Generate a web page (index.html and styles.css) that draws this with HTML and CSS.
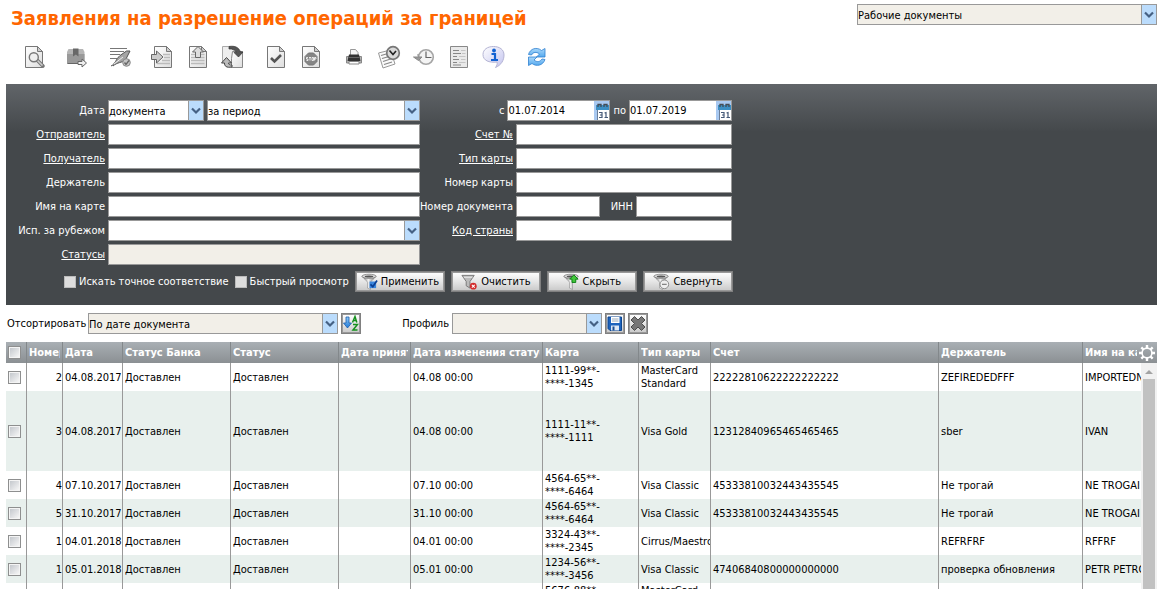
FILE: index.html
```html
<!DOCTYPE html>
<html lang="ru">
<head>
<meta charset="utf-8">
<title>Заявления на разрешение операций за границей</title>
<link rel="stylesheet" href="styles.css">
</head>
<body>
<svg class="defs" aria-hidden="true">
  <defs>
    <linearGradient id="paper" x1="0" y1="0" x2="1" y2="1"><stop offset="0" stop-color="#fff"/><stop offset="1" stop-color="#dedede"/></linearGradient>
    <linearGradient id="metal" x1="0" y1="0" x2="1" y2="0"><stop offset="0" stop-color="#555"/><stop offset=".45" stop-color="#f4f4f4"/><stop offset="1" stop-color="#666"/></linearGradient>
    <linearGradient id="blue" x1="0" y1="0" x2="0" y2="1"><stop offset="0" stop-color="#8fcbf7"/><stop offset="1" stop-color="#1f78d8"/></linearGradient>
    <linearGradient id="sky" x1="0" y1="0" x2="0" y2="1"><stop offset="0" stop-color="#a9d8fb"/><stop offset="1" stop-color="#55a9ee"/></linearGradient>
    <linearGradient id="bubble" x1="0" y1="0" x2="1" y2="1"><stop offset="0" stop-color="#fff"/><stop offset="1" stop-color="#c3c3ee"/></linearGradient>
    <symbol id="page" viewBox="0 0 24 24"><path d="M3.500 1.500h12l5 5v16h-17z" fill="url(#paper)" stroke="#777"/><path d="M15.500 1.500v5h5z" fill="#ccc" stroke="#777"/></symbol>
    <symbol id="funnel" viewBox="0 0 18 18"><path d="M1 3.500C3 6 6 8 7 10v6l3 1.500V10c1-2 4-4 6-6.500z" fill="url(#metal)" stroke="#888" stroke-width=".6"/><ellipse cx="8.500" cy="3.500" rx="7.500" ry="2.200" fill="#ddd" stroke="#777" stroke-width=".8"/><ellipse cx="8.500" cy="3.700" rx="4.500" ry="1.100" fill="#555"/></symbol>
    <symbol id="calendar" viewBox="0 0 15 19"><path d="M0 0h15v19H0z" fill="#a9c9f1"/><path d="M3 9h12v10H3z" fill="#fff"/><path d="M2 4h13v5H2z" fill="#3c8fc4"/><path d="M3.500 19V9" fill="none" stroke="#6c7f99"/><path d="M4 6V3.500h3V6M10 6V3.500h3V6" fill="none" stroke="#454c55" stroke-width="1.300"/><path d="M5 11.500h3V16.500H5M6 14h2M10.500 12l1.500-.5v5M10.500 16.500h3.500" fill="none" stroke="#465a78" stroke-width="1.200"/></symbol>
  </defs>
</svg>
<div class="app">
  <header class="top">
    <h1 class="title">Заявления на разрешение операций за границей</h1>
    <select class="combo muted scope" aria-label="Раздел"><option>Рабочие документы</option></select>
  </header>

  <nav class="toolbar" aria-label="Действия">
    <button class="tool" aria-label="Просмотр"><svg viewBox="0 0 24 24"><use href="#page"/><path d="M15 15l6 6" stroke="#777" stroke-width="3.600" stroke-linecap="round"/><path d="M15 15l5.500 5.500" stroke="#ccc" stroke-width="1.600"/><circle cx="11.800" cy="12.200" r="4.500" fill="#eee" stroke="#777" stroke-width="1.400"/></svg></button>
    <button class="tool" aria-label="Архив"><svg viewBox="0 0 24 24"><path d="M3.500 4h14.500l1.500 3v11.500H2V7z" fill="#b5b5b5"/><path d="M2 9h17.500v9.500H2z" fill="#999"/><path d="M2.500 18.500h16" stroke="#666"/><path d="M8 3.500h5.500v8l-2.700-2-2.800 2z" fill="#686868"/><path d="M13 16.500h4V14l4.500 4-4.500 4v-2.500h-4z" fill="#eee" stroke="#666"/></svg></button>
    <button class="tool" aria-label="Подписать"><svg viewBox="0 0 24 24"><path d="M2 3.500h17M2 6.500h14M2 9.500h10M2 13.500h7" stroke="#777"/><path d="M3 21c4-1.500 5-7 9-10.500l6.500-4.500h3.500l-4.500 9c-4 3-8 2-12.500 6" fill="#a5a5a5" stroke="#555"/><path d="M6 19l9-7" stroke="#eee"/><circle cx="18.500" cy="17.500" r="3.800" fill="#c4c4c4" stroke="#888"/><path d="M16.500 17.500l1.500 2 3-4" fill="none" stroke="#666" stroke-width="1.300"/></svg></button>
    <span class="tool-group">
      <button class="tool" aria-label="Импорт"><svg viewBox="0 0 24 24"><use href="#page"/><path d="M12 9.500h7M13 12.500h6M11 15.500h8M6 18.500h13" stroke="#bbb" stroke-width="1.500"/><path d="M.5 9.500h5V6l6.500 6-6.500 6v-3.500h-5z" fill="#ccc" stroke="#666"/></svg></button>
      <button class="tool" aria-label="Экспорт"><svg viewBox="0 0 24 24"><use href="#page"/><path d="M5 9.500h13.500M5 12.500h13.500M5 15.500h13.500M5 18.500h13.500" stroke="#bbb" stroke-width="1.500"/><path d="M9.500 12.500V7H6.500L12 1.500 17.500 7h-3v5.500z" fill="#ddd" stroke="#666"/></svg></button>
      <button class="tool" aria-label="Обмен"><svg viewBox="0 0 24 24"><path d="M1.500 1.500h7l4 4v12h-11z" fill="#eee" stroke="#aaa"/><path d="M11.500 6.500h10v16h-11v-9z" fill="url(#paper)" stroke="#888"/><path d="M8 1.500c6-1 10 1 11.500 5.500h2.500L17.500 12 13 7.500h2.500C14 5 12 3.500 8 4z" fill="#555" stroke="#333" stroke-width=".7"/><path d="M11 22c-6 1-7.500-1-7.500-4H.5L5.500 12.500l5 5.500H7.500c0 1.500 1 2 3.500 2z" fill="#bbb" stroke="#444"/></svg></button>
    </span>
    <span class="tool-group">
      <button class="tool" aria-label="Проверить"><svg viewBox="0 0 24 24"><use href="#page"/><path d="M7 13l3.500 3.500L17 10" fill="none" stroke="#555" stroke-width="2.600"/></svg></button>
      <button class="tool" aria-label="Остановить"><svg viewBox="0 0 24 24"><use href="#page"/><path d="M9.500 8h5l3.500 3.500v5L14.500 20h-5L6 16.500v-5z" fill="#858585" stroke="#777"/><path d="M9 12.500H7.500V14H9v1.500H7.500M10 12.500h2M11 12.500v3M13 12.500h1.500v3H13zM15.500 15.500v-3H17V14h-1.500" fill="none" stroke="#fff" stroke-width=".8"/></svg></button>
    </span>
    <span class="tool-group">
      <button class="tool" aria-label="Печать"><svg viewBox="0 0 24 24"><path d="M8.500 12V4.500h5l2.500 3V12" fill="#f6f6f6" stroke="#999"/><path d="M4.500 11.500h15v6.500h-15z" fill="#b5b5b5" stroke="#888"/><path d="M7 9.500h10l1.500 6.500h-13z" fill="#333"/><path d="M7 12.500h10" stroke="#666"/><path d="M7 16.500h10v2.500H7z" fill="#fff" stroke="#888"/></svg></button>
      <button class="tool" aria-label="Расписание"><svg viewBox="0 0 24 24"><path d="M1.500 8l12-3 4.500 14-12 4z" fill="#fafafa" stroke="#999"/><path d="M4 10.500l7-2M5 13.500l9-2.500M6 16.500l9-3M7 19.500l8-2.500" stroke="#888" stroke-width="1.200"/><circle cx="16" cy="8" r="6.300" fill="#d9d9d9" stroke="#777" stroke-width="1.700"/><path d="M12.500 5.500L16 9.500l3-3.500" fill="none" stroke="#222" stroke-width="1.600"/></svg></button>
      <button class="tool" aria-label="История"><svg viewBox="0 0 24 24"><circle cx="14" cy="12" r="7.300" fill="#f4f4f4" stroke="#a5a5a5" stroke-width="1.600"/><path d="M14 6.500v6h5.500" fill="none" stroke="#666" stroke-width="1.200"/><path d="M1.500 12h8.500L6.500 15.500z" fill="#999" stroke="#888"/><path d="M6 11.500V9" stroke="#888"/></svg></button>
      <button class="tool" aria-label="Реестр"><svg viewBox="0 0 24 24"><path d="M3.500 1.500h17v21h-17z" fill="#e9e9e9" stroke="#888"/><path d="M6 5.500h6M6 8.500h8M6 11.500h4M6 14.500h6M6 17.500h4M6 20h8" stroke="#888" stroke-width="1.200"/><path d="M14 5.500h4.500M15 8.500h3.500M12 11.500h6.500M14 14.500h4.500M12 17.500h6.500" stroke="#c4c4c4" stroke-width="1.200"/></svg></button>
      <button class="tool" aria-label="Информация"><svg viewBox="0 0 24 24"><path d="M11.500 1.500c6 0 10.500 3 10.500 8.500 0 5-2.500 10-8.500 12.500 1.500-2 2-3.500 1.500-5.500C7 18 1 15.500 1 9.500c0-5 4.500-8 10.500-8z" fill="url(#bubble)" stroke="#b4b4d4"/><circle cx="12" cy="5.500" r="1.900" fill="#1463d2"/><path d="M9.500 9h3.500v5.500M9 15h7" fill="none" stroke="#1463d2" stroke-width="2.200"/></svg></button>
    </span>
    <button class="tool" aria-label="Обновить"><svg viewBox="0 0 24 24"><path d="M3.500 9.500C5 3.500 12 1.500 16.500 5.500l3.500-2v8.500h-8.500l3-3C11.500 6.500 8 7 6.500 10z" fill="url(#sky)" stroke="#2f80d0" stroke-width=".8"/><path d="M20 14.500c-2 6-8.500 7.500-13 4L3.500 20.500V12H12l-3 3c3 2.500 6 2 8-1z" fill="url(#sky)" stroke="#2f80d0" stroke-width=".8"/></svg></button>
  </nav>

  <form class="filter">
    <div class="fields">
      <label for="date-kind">Дата</label>
      <div class="pair">
        <select class="combo kind" id="date-kind"><option>документа</option></select>
        <select class="combo grow" aria-label="Период"><option>за период</option></select>
      </div>
      <div class="period">
        <label for="from">с</label>
        <span class="date"><input id="from" value="01.07.2014"><button type="button" aria-label="Календарь"><svg viewBox="0 0 15 19"><use href="#calendar"/></svg></button></span>
        <label for="to">по</label>
        <span class="date"><input id="to" value="01.07.2019"><button type="button" aria-label="Календарь"><svg viewBox="0 0 15 19"><use href="#calendar"/></svg></button></span>
      </div>

      <label for="sender"><a href="#">Отправитель</a></label><input class="box" id="sender">
      <label for="account"><a href="#">Счет №</a></label><input class="box" id="account">
      <label for="receiver"><a href="#">Получатель</a></label><input class="box" id="receiver">
      <label for="card-type"><a href="#">Тип карты</a></label><input class="box" id="card-type">
      <label for="holder">Держатель</label><input class="box" id="holder">
      <label for="card-no">Номер карты</label><input class="box" id="card-no">
      <label for="card-name">Имя на карте</label><input class="box" id="card-name">
      <label for="doc-no">Номер документа</label>
      <div class="pair split"><input class="box doc" id="doc-no"><label for="inn">ИНН</label><input class="box inn" id="inn"></div>
      <label for="abroad">Исп. за рубежом</label><select class="combo" id="abroad"><option></option></select>
      <label for="country"><a href="#">Код страны</a></label><input class="box" id="country">
      <label for="statuses"><a href="#">Статусы</a></label><input class="box muted" id="statuses" readonly>
    </div>
    <div class="actions">
      <label class="check"><input type="checkbox">Искать точное соответствие</label>
      <label class="check"><input type="checkbox">Быстрый просмотр</label>
      <div class="buttons">
        <button type="button" class="btn"><svg viewBox="0 0 18 18"><use href="#funnel"/><path d="M9 9h7v7H9z" fill="#3a86dd"/><path d="M10 12l2.500 2.500L17 8" fill="none" stroke="#0b3f93" stroke-width="1.800"/></svg>Применить</button>
        <button type="button" class="btn"><svg viewBox="0 0 18 18"><path d="M1 2.500h13L9.500 9v7l-4-2.500V9z" fill="#bbb" stroke="#777"/><path d="M3 4.500h9" stroke="#eee"/><circle cx="13" cy="14" r="3.600" fill="#d32c2c"/><path d="M11.500 12.500l3 3M14.500 12.500l-3 3" stroke="#fff" stroke-width="1.100"/></svg>Очистить</button>
        <button type="button" class="btn"><svg viewBox="0 0 18 18"><use href="#funnel"/><path d="M9.500 10V6.500H7L11.500 2 16 6.500h-2.500V10z" fill="#43c73b" stroke="#0a7d12"/></svg>Скрыть</button>
        <button type="button" class="btn"><svg viewBox="0 0 18 18"><use href="#funnel"/><circle cx="12" cy="12" r="4.600" fill="#eee" stroke="#888"/><path d="M9.500 12h5" stroke="#777" stroke-width="1.200"/></svg>Свернуть</button>
      </div>
    </div>
  </form>

  <div class="sortbar">
    <label for="sort">Отсортировать</label>
    <select class="combo muted sort" id="sort"><option>По дате документа</option></select>
    <button class="mini" aria-label="Порядок сортировки"><svg viewBox="0 0 16 17"><path d="M3 2h3v6h2.500l-4 5-4-5H3z" fill="url(#blue)" stroke="#1a5dac" stroke-width=".8"/><path d="M9.500 7.500L12 1.500l1.800 6M10.500 5.500h3M10 9.500h4.500L10 15h4.500" fill="none" stroke="#16911e" stroke-width="1.500"/></svg></button>
    <label class="profile-label" for="profile">Профиль</label>
    <select class="combo muted profile" id="profile"><option></option></select>
    <button class="mini" aria-label="Сохранить профиль"><svg viewBox="0 0 16 17"><path d="M1 2h13.500v13.500H3L1 13.500z" fill="#1d63bd" stroke="#0d458f"/><path d="M4 2h8.500v6H4z" fill="#fff"/><path d="M5 4h6.500M5 6h6.500" stroke="#9ab"/><path d="M4 10.500h8v5H4z" fill="#dde8f5"/><path d="M5.500 11.500h2v4h-2z" fill="#1d4f91"/></svg></button>
    <button class="mini" aria-label="Удалить профиль"><svg viewBox="0 0 16 17"><path d="M4.500 1.500L8 5l3.500-3.500 3.500 3.500-3.500 3.500L15 12l-3.500 3.500L8 12l-3.500 3.500L1 12l3.500-3.500L1 5z" fill="#777" stroke="#4c4c4c" stroke-linejoin="round"/></svg></button>
  </div>

  <section class="grid">
    <table>
      <colgroup><col class="w-check"><col class="w-no"><col class="w-date"><col class="w-status"><col class="w-status"><col class="w-72"><col class="w-changed"><col class="w-card"><col class="w-72"><col class="w-account"><col class="w-holder"><col></colgroup>
      <thead><tr>
        <th><input type="checkbox" aria-label="Выбрать все"></th><th><span>Номер</span></th><th><span>Дата</span></th><th><span>Статус Банка</span></th><th><span>Статус</span></th><th><span>Дата принятия</span></th><th><span>Дата изменения статуса</span></th><th><span>Карта</span></th><th><span>Тип карты</span></th><th><span>Счет</span></th><th><span>Держатель</span></th><th><span>Имя на карте</span></th>
      </tr></thead>
      <tbody>
        <tr><td><input type="checkbox" aria-label="Выбрать"></td><td>2</td><td>04.08.2017</td><td>Доставлен</td><td>Доставлен</td><td></td><td>04.08 00:00</td><td>1111-99**-<br>****-1345</td><td>MasterCard<br>Standard</td><td>22222810622222222222</td><td>ZEFIREDEDFFF</td><td>IMPORTEDNAME</td></tr>
        <tr class="tall"><td><input type="checkbox" aria-label="Выбрать"></td><td>3</td><td>04.08.2017</td><td>Доставлен</td><td>Доставлен</td><td></td><td>04.08 00:00</td><td>1111-11**-<br>****-1111</td><td>Visa Gold</td><td>12312840965465465465</td><td>sber</td><td>IVAN</td></tr>
        <tr><td><input type="checkbox" aria-label="Выбрать"></td><td>4</td><td>07.10.2017</td><td>Доставлен</td><td>Доставлен</td><td></td><td>07.10 00:00</td><td>4564-65**-<br>****-6464</td><td>Visa Classic</td><td>45333810032443435545</td><td>Не трогай</td><td>NE TROGAI</td></tr>
        <tr><td><input type="checkbox" aria-label="Выбрать"></td><td>5</td><td>31.10.2017</td><td>Доставлен</td><td>Доставлен</td><td></td><td>31.10 00:00</td><td>4564-65**-<br>****-6464</td><td>Visa Classic</td><td>45333810032443435545</td><td>Не трогай</td><td>NE TROGAI</td></tr>
        <tr><td><input type="checkbox" aria-label="Выбрать"></td><td>1</td><td>04.01.2018</td><td>Доставлен</td><td>Доставлен</td><td></td><td>04.01 00:00</td><td>3324-43**-<br>****-2345</td><td>Cirrus/Maestro</td><td></td><td>REFRFRF</td><td>RFFRF</td></tr>
        <tr><td><input type="checkbox" aria-label="Выбрать"></td><td>1</td><td>05.01.2018</td><td>Доставлен</td><td>Доставлен</td><td></td><td>05.01 00:00</td><td>1234-56**-<br>****-3456</td><td>Visa Classic</td><td>47406840800000000000</td><td>проверка обновления</td><td>PETR PETROV</td></tr>
        <tr><td></td><td></td><td></td><td></td><td></td><td></td><td></td><td>5676-88**-<br>****</td><td>MasterCard<br>Standard</td><td></td><td></td><td></td></tr>
      </tbody>
    </table>
    <button class="gear" aria-label="Настройка столбцов"><svg viewBox="0 0 18 18"><circle cx="9" cy="9" r="4.900" fill="none" stroke="#fff" stroke-width="1.600"/><path d="M9 1v3M9 14v3M1 9h3M14 9h3M3.300 3.300l2.200 2.200M12.500 12.500l2.200 2.200M3.300 14.700l2.200-2.200M12.500 5.500l2.200-2.200" stroke="#fff" stroke-width="2.400"/></svg></button>
    <div class="scroll"><svg viewBox="0 0 16 16"><path d="M4 11l4-4 4 4z" fill="#a3a3a3"/></svg><div class="thumb"></div></div>
  </section>
</div>
</body>
</html>
```
FILE: styles.css
```css
* { box-sizing: border-box; }

body {
  margin: 0;
  background: #fff;
  color: #000;
  font: 11px/13px "DejaVu Sans Condensed", "DejaVu Sans", sans-serif;
}

button, input, select { margin: 0; padding: 0; font: inherit; color: inherit; border-radius: 0; }
button svg { display: block; }
.defs { position: absolute; width: 0; height: 0; }

.app {
  display: flex;
  flex-direction: column;
  height: 100vh;
  padding: 4px 3px 0 6px;
  overflow: hidden;
}

.top { display: flex; justify-content: space-between; align-items: flex-start; height: 41px; }
.title { margin: 0; padding-left: 5px; color: #f60; font-size: 20px; line-height: 28px; font-weight: bold; }

.combo {
  appearance: none;
  height: 21px;
  padding: 1px 16px 0 0;
  border: 1px solid #999;
  background: #fff url("data:image/svg+xml,%3Csvg xmlns='http://www.w3.org/2000/svg' width='15' height='19'%3E%3Cpath d='M0 0h15v19H0z' fill='%23bbdcfc'/%3E%3Cpath d='M.5 0v19' stroke='%23999'/%3E%3Cpath d='M4 7.500l4 4 4-4' fill='none' stroke='%23456184' stroke-width='2.200'/%3E%3C/svg%3E") right center no-repeat;
}
.muted { background-color: #f2efe8; }
.scope { width: 300px; }

.toolbar { display: flex; gap: 19px; height: 39px; padding-left: 16px; }
.tool-group { display: flex; gap: 11px; }
.tool { width: 24px; height: 24px; border: 0; background: none; }

.filter {
  padding: 16px 0 13px;
  background: linear-gradient(#616569, #44484b 48px);
  color: #fff;
}
.fields {
  display: grid;
  grid-template-columns: 99px 312px 90px 216px;
  grid-auto-rows: 21px;
  column-gap: 3px;
  row-gap: 3px;
}
.fields > label { justify-self: end; line-height: 21px; white-space: nowrap; }
.fields > .box:nth-child(4n + 3), .fields > .split { justify-self: end; }
.fields a { color: #fff; }
.fields .combo, .fields .box, .date { color: #000; }
.box { width: 100%; height: 21px; padding: 0 1px; border: 1px solid #999; background: #fff; }
.box.muted { background: #f2efe8; }
.pair { display: flex; gap: 3px; }
.kind { width: 96px; }
.grow { flex: 1; }
.split { width: 100%; align-items: center; }
.doc { width: 84px; }
.inn { width: 96px; }
.split label { flex: 1; text-align: right; }
.period { grid-column: 3 / 5; display: flex; justify-content: flex-end; align-items: center; gap: 3px; }
.date { display: flex; width: 103px; height: 21px; border: 1px solid #999; background: #fff; }
.date input { flex: 1; min-width: 0; border: 0; background: none; }
.date button { width: 15px; border: 0; background: #a9c9f1; }
.fields { justify-content: start; }

.actions { display: flex; align-items: center; padding: 6px 0 0 58px; }
.check { display: flex; align-items: center; gap: 3px; margin-right: 6px; white-space: nowrap; }
input[type="checkbox"] {
  appearance: none;
  display: block;
  width: 13px;
  height: 13px;
  border: 1px solid #8e8f8f;
  background: linear-gradient(135deg, #c4c8cd, #f6f6f6) center / 9px 9px no-repeat #f4f4f4;
}
.check input[type="checkbox"] { width: 12px; height: 12px; background: #ddd; border-color: #bbb; }
.buttons { display: flex; gap: 6px; }
.btn, .mini {
  display: flex;
  align-items: center;
  justify-content: center;
  height: 21px;
  border: 1px solid #808080;
  box-shadow: inset 0 0 0 1px #999;
  background: linear-gradient(#fff, #e6e6e6 50%, #c8c8c8);
}
.btn { width: 90px; gap: 3px; color: #000; white-space: nowrap; }
.btn svg { width: 17px; height: 17px; }
.mini { width: 20px; }
.mini svg { width: 16px; height: 17px; flex: none; }

.sortbar { display: flex; align-items: center; gap: 3px; height: 37px; padding-left: 1px; }
.sortbar label { width: 78px; white-space: nowrap; }
.sort { width: 250px; }
.sortbar .profile-label { width: 85px; text-align: right; }
.profile { width: 150px; }

.grid { position: relative; flex: 1; min-height: 0; overflow: hidden; }
table { width: 100%; table-layout: fixed; border-collapse: separate; border-spacing: 0; }
.w-check { width: 21px; }
.w-no { width: 36px; }
.w-date { width: 60px; }
.w-status { width: 108px; }
.w-72 { width: 72px; }
.w-changed { width: 132px; }
.w-card { width: 96px; }
.w-account { width: 228px; }
.w-holder { width: 144px; }
th, td { padding: 0 0 0 2px; border-right: 1px solid #999; overflow: hidden; white-space: nowrap; text-align: left; }
th:last-child, td:last-child { border-right: 0; }
thead tr, .gear { background: linear-gradient(#a9afb4, #8b9093); }
th { height: 21px; padding-right: 2px; border-color: #83888b; color: #fff; }
th span { display: block; overflow: hidden; }
td { height: 28px; }
.tall td { height: 80px; }
td:nth-child(2) { text-align: right; }
tbody tr:nth-child(even) { background: #e8f0ed; }

.gear { position: absolute; top: 0; right: 0; width: 20px; height: 21px; padding-left: 1px; border: 0; }
.gear svg { width: 18px; height: 18px; }
.scroll { position: absolute; top: 21px; right: 0; bottom: 0; width: 16px; display: flex; flex-direction: column; align-items: center; background: #f1f1f1; }
.scroll svg { width: 16px; height: 16px; flex: none; }
.thumb { flex: 1; width: 12px; background: #c1c1c1; }
```
